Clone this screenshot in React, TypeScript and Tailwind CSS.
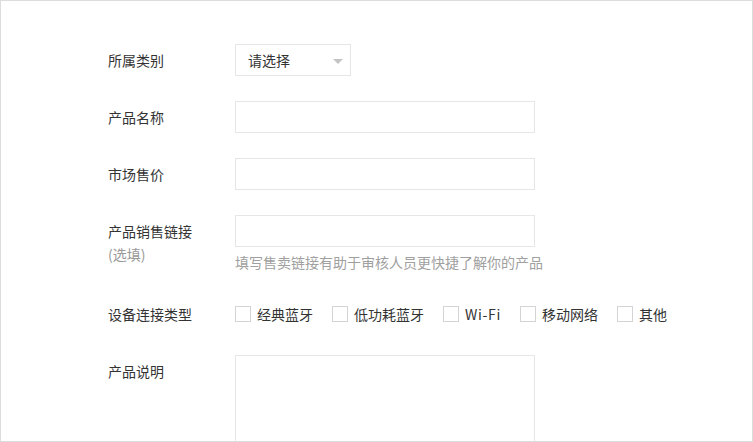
import React from "react";

/* ── Form data ── */
const textRows = [
  { label: "产品名称" },
  { label: "市场售价" },
];

const connTypes = ["经典蓝牙", "低功耗蓝牙", "Wi-Fi", "移动网络", "其他"];

const font = { fontFamily: '"Noto Sans CJK SC", "Microsoft YaHei", sans-serif' };

/* ── Pieces ── */
const Label: React.FC<{ children: React.ReactNode }> = ({ children }) => (
  <div className="w-[127px] shrink-0 text-[14px] leading-8 text-[#333]">{children}</div>
);

const TextInput: React.FC = () => (
  <input
    type="text"
    className="w-[300px] h-8 border border-[#e6e6e6] bg-white px-3 text-[14px] outline-none"
  />
);

const App: React.FC = () => {
  return (
    <div
      className="w-[753px] h-[442px] overflow-hidden border border-[#dcdcdc] bg-white pt-[43px] pl-[107px]"
      style={font}
    >
      {/* 所属类别 */}
      <div className="flex items-start mb-[25px]">
        <Label>所属类别</Label>
        <div className="relative w-[116px] h-8 border border-[#e6e6e6] flex items-center pl-3">
          <span className="text-[14px] text-[#333]">请选择</span>
          <span className="absolute right-[7px] top-[14px] w-0 h-0 border-l-[5px] border-r-[5px] border-t-[5px] border-l-transparent border-r-transparent border-t-[#c4c4c4]" />
        </div>
      </div>

      {textRows.map((r) => (
        <div key={r.label} className="flex items-start mb-[25px]">
          <Label>{r.label}</Label>
          <TextInput />
        </div>
      ))}

      {/* 产品销售链接 */}
      <div className="flex items-start mb-[26px]">
        <div className="w-[127px] shrink-0 text-[14px] text-[#333]">
          <div className="leading-8">产品销售链接</div>
          <div className="leading-[15px] text-[#999]">(选填)</div>
        </div>
        <div>
          <TextInput />
          <p className="mt-[5px] text-[14px] leading-5 text-[#a0a0a0] whitespace-nowrap">
            填写售卖链接有助于审核人员更快捷了解你的产品
          </p>
        </div>
      </div>

      {/* 设备连接类型 */}
      <div className="flex items-center h-8 mb-[25px]">
        <Label>设备连接类型</Label>
        <div className="flex items-center">
          {connTypes.map((t) => (
            <label key={t} className="flex items-center mr-[19px] text-[14px] text-[#333]">
              <span className="w-4 h-4 border border-[#d4d4d4] bg-white mr-[6px]" />
              <span className={t === "Wi-Fi" ? "tracking-[0.7px]" : ""}>{t}</span>
            </label>
          ))}
        </div>
      </div>

      {/* 产品说明 */}
      <div className="flex items-start">
        <Label>产品说明</Label>
        <textarea className="w-[300px] h-[120px] border border-[#e6e6e6] resize-none outline-none" />
      </div>
    </div>
  );
};

export default App;
